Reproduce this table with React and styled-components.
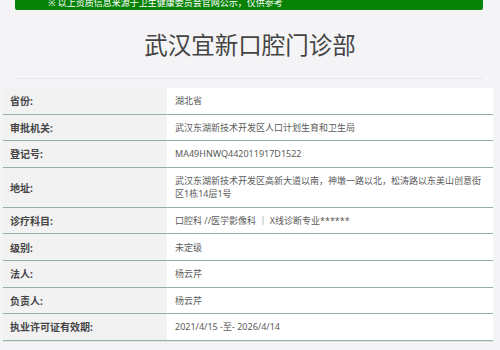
import React from "react";
import styled, { createGlobalStyle } from "styled-components";

const rows = [
  { label: "省份:", value: "湖北省" },
  { label: "审批机关:", value: "武汉东湖新技术开发区人口计划生育和卫生局" },
  { label: "登记号:", value: "MA49HNWQ442011917D1522" },
  {
    label: "地址:",
    value: "武汉东湖新技术开发区高新大道以南，神墩一路以北，松涛路以东美山创意街区1栋14层1号",
    tall: true,
  },
  { label: "诊疗科目:", value: "口腔科 //医学影像科 ｜ X线诊断专业******" },
  { label: "级别:", value: "未定级" },
  { label: "法人:", value: "杨云芹" },
  { label: "负责人:", value: "杨云芹" },
  { label: "执业许可证有效期:", value: "2021/4/15 -至- 2026/4/14" },
];

const GlobalStyle = createGlobalStyle`
  body {
    margin: 0;
    background: #f4f4f6;
    font-family: "Noto Sans", "Noto Sans CJK SC", sans-serif;
  }
`;

export default function App() {
  return (
    <>
      <GlobalStyle />
      <Page>
        <Banner>
          <span>※ 以上资质信息来源于卫生健康委员会官网公示，仅供参考</span>
        </Banner>
        <Title>武汉宜新口腔门诊部</Title>
        <Divider />
        <Table>
          {rows.map((row) => (
            <Row key={row.label} $tall={row.tall}>
              <Label>{row.label}</Label>
              <Value>{row.value}</Value>
            </Row>
          ))}
        </Table>
      </Page>
    </>
  );
}

const Page = styled.div`
  width: 500px;
  height: 350px;
  overflow: hidden;
`;

const Banner = styled.div`
  margin: 0 17px 0 15px;
  height: 10px;
  background: #078207;
  border-radius: 0 0 2px 2px;
  overflow: hidden;
  display: flex;
  align-items: flex-end;
  padding-left: 33px;

  span {
    color: #fff;
    font-size: 9px;
    line-height: 12px;
    margin-bottom: 1px;
    white-space: nowrap;
  }
`;

const Title = styled.h1`
  margin: 0;
  height: 68px;
  display: flex;
  align-items: center;
  justify-content: center;
  font-size: 23.5px;
  font-weight: 400;
  color: #444;
  font-family: "Noto Sans CJK SC", sans-serif;
`;

const Divider = styled.div`
  margin: 0 17px 0 15px;
  height: 1px;
  background: #e8e8ea;
`;

const Table = styled.div`
  margin: 9px 7px 0 3px;
  display: flex;
  flex-direction: column;
`;

const Row = styled.div`
  display: grid;
  grid-template-columns: 164px 1fr;
  height: ${(p) => (p.$tall ? "40px" : "26.6px")};
  box-sizing: border-box;
  border-bottom: 1px solid #93b1a7;
  box-shadow: 0 1px 0 #dde6e3;
`;

const Label = styled.div`
  background: #f2f2f3;
  padding-left: 7px;
  display: flex;
  align-items: center;
  font-size: 10px;
  font-weight: 700;
  color: #454545;
`;

const Value = styled.div`
  background: #fff;
  padding: 0 8px;
  display: flex;
  align-items: center;
  font-size: 9px;
  line-height: 13px;
  color: #5a5a5a;
`;
